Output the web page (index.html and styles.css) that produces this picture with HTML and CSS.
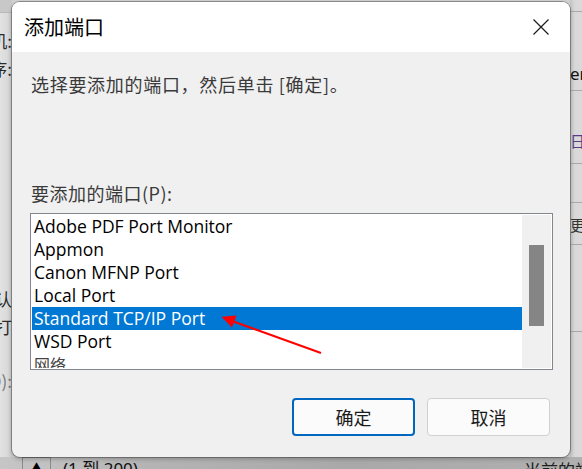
FILE: index.html
```html
<!DOCTYPE html>
<html lang="zh-CN">
<head>
<meta charset="utf-8">
<title>添加端口</title>
<link rel="stylesheet" href="styles.css">
</head>
<body>
<div class="backdrop">
  <div class="bg-left">
    <div class="frag f1">打印机:</div>
    <div class="frag f2">程序:</div>
    <div class="frag f3">默认</div>
    <div class="frag f4">打</div>
    <div class="frag f5">(D):</div>
  </div>
  <div class="bg-mid"></div>
  <div class="bg-right">
    <div class="rline r1"></div>
    <div class="rtext rt1">er</div>
    <div class="rline r2"></div>
    <div class="rtext rt2">日志</div>
    <div class="rline r3"></div>
    <div class="rline r4"></div>
    <div class="rtext rt3">更改</div>
    <div class="rline r5"></div>
    <div class="rline r6"></div>
  </div>
  <div class="bg-bottom">
    <span class="mini-btn">▲</span>
    <span class="btm-text">(1 到 200)</span>
    <span class="btm-right">当前的端口</span>
  </div>
</div>

<div class="dialog">
  <div class="titlebar">
    <span class="title">添加端口</span>
    <svg class="close" width="16" height="16" viewBox="0 0 16 16"><path d="M0.5 0.5 L15.5 15.5 M15.5 0.5 L0.5 15.5" stroke="#1a1a1a" stroke-width="1.2" fill="none"/></svg>
  </div>
  <div class="content">
    <div class="instr">选择要添加的端口，然后单击 [确定]。</div>
    <div class="label">要添加的端口(P):</div>
    <div class="listbox">
      <div class="items">
        <div class="item">Adobe PDF Port Monitor</div>
        <div class="item">Appmon</div>
        <div class="item">Canon MFNP Port</div>
        <div class="item">Local Port</div>
        <div class="item selected">Standard TCP/IP Port</div>
        <div class="item">WSD Port</div>
        <div class="item cjk">网络</div>
      </div>
      <div class="scrollbar"><div class="thumb"></div></div>
    </div>
    <div class="buttons">
      <div class="btn primary">确定</div>
      <div class="btn">取消</div>
    </div>
  </div>
</div>

<svg class="arrow" width="582" height="469" viewBox="0 0 582 469">
  <line x1="321" y1="353" x2="232" y2="321" stroke="#ff0000" stroke-width="2"/>
  <polygon points="221.5,316.8 236.5,315.6 232.0,327.4" fill="#ff0000"/>
</svg>
</body>
</html>
```

FILE: styles.css
```css
html, body {
  margin: 0;
  padding: 0;
}
body {
  width: 582px;
  height: 469px;
  overflow: hidden;
  position: relative;
  background: #c8c8c8;
  font-family: "Noto Sans CJK SC", "Noto Sans", sans-serif;
}

/* ---------- dimmed window behind ---------- */
.backdrop {
  display: grid;
  grid-template-columns: 12px 1fr 12px;
  grid-template-rows: 457px 12px;
  width: 582px;
  height: 469px;
}
.bg-left {
  background: linear-gradient(to right, #e2e2e2 0%, #dadada 60%, #c9c9c9 100%);
  display: flex;
  flex-direction: column;
  overflow: hidden;
  border-top: 1px solid #b8b8b8;
  margin-top: 12px;
}
.frag {
  display: flex;
  justify-content: flex-end;
  white-space: nowrap;
  font-size: 17px;
  line-height: 20px;
  height: 20px;
  color: #2a2a2a;
}
.f1 { margin-top: 18px; }
.f2 { margin-top: 8px; }
.f3 { margin-top: 210px; }
.f4 { margin-top: 8px; }
.f5 { margin-top: 34px; color: #777; }

.bg-mid { background: #d0d0d0; }

.bg-right {
  background: linear-gradient(to right, #c4c4c4 0%, #d8d8d8 40%, #dadada 100%);
  display: flex;
  flex-direction: column;
  overflow: hidden;
}
.rline { height: 1px; background: #a9a9a9; flex: none; }
.r1 { margin-top: 11px; }
.rtext {
  display: flex;
  justify-content: flex-start;
  white-space: nowrap;
  font-family: "Noto Sans", sans-serif;
  font-size: 17px;
  line-height: 20px;
  height: 20px;
  color: #111;
}
.rt1 { margin-top: 52px; }
.r2 { margin-top: 6px; }
.rt2 { margin-top: 40px; font-family: "Noto Sans CJK SC", sans-serif; font-size: 15px; color: #5a3a8a; }
.r3 { margin-top: 12px; }
.r4 { margin-top: 38px; }
.rt3 { margin-top: 12px; font-family: "Noto Sans CJK SC", sans-serif; font-size: 15px; color: #333; }
.r5 { margin-top: 9px; }
.r6 { margin-top: 86px; }

.bg-bottom {
  grid-column: 1 / 4;
  background: linear-gradient(to right, #c6c6c6 0%, #b4b4b4 25%, #a9a9a9 60%, #b0b0b0 100%);
  display: flex;
  align-items: flex-start;
  overflow: hidden;
  position: relative;
}
.mini-btn {
  margin-left: 22px;
  width: 27px;
  height: 14px;
  border: 1px solid #8a8a8a;
  border-bottom: none;
  background: #c2c2c2;
  font-size: 12px;
  line-height: 20px;
  text-align: center;
  color: #000;
}
.btm-text {
  margin-left: 12px;
  margin-top: 2px;
  font-family: "Noto Sans", "Noto Sans CJK SC", sans-serif;
  font-size: 17px;
  line-height: 20px;
  color: #111;
}
.btm-right {
  margin-left: auto;
  margin-right: 0;
  margin-top: 3px;
  width: 58px;
  white-space: nowrap;
  overflow: hidden;
  font-size: 17px;
  line-height: 20px;
  color: #222;
}

/* ---------- dialog ---------- */
.dialog {
  position: absolute;
  left: 12px;
  top: 2px;
  width: 558px;
  height: 455px;
  border-radius: 8px;
  background: #f0f0f0;
  box-shadow: 0 0 0 1px rgba(60, 60, 60, 0.45), 0 2px 4px rgba(0, 0, 0, 0.25);
  overflow: hidden;
  display: flex;
  flex-direction: column;
}
.titlebar {
  height: 50px;
  background: #ffffff;
  display: flex;
  align-items: center;
  justify-content: space-between;
  padding: 0 21px 0 12px;
  flex: none;
}
.title {
  font-size: 20px;
  color: #000;
  line-height: 24px;
}
.close {
  display: block;
  margin-top: -1px;
}

.content {
  display: flex;
  flex-direction: column;
  padding: 20px 17px 0 18px;
}
.instr {
  font-size: 18px;
  line-height: 24px;
  height: 24px;
  color: #3a3a3a;
  padding-left: 1px;
  letter-spacing: 0.7px;
}
.label {
  margin-top: 85px;
  font-size: 18px;
  line-height: 24px;
  height: 24px;
  color: #3a3a3a;
  padding-left: 1px;
  letter-spacing: 0.5px;
}
.listbox {
  margin-top: 8px;
  height: 157px;
  box-sizing: border-box;
  border: 1px solid #82868e;
  background: #ffffff;
  padding: 1px;
  display: grid;
  grid-template-columns: 1fr 29px;
  overflow: hidden;
}
.items {
  display: flex;
  flex-direction: column;
  overflow: hidden;
}
.item {
  flex: none;
  height: 23px;
  line-height: 23px;
  padding-left: 2px;
  font-family: "Open Sans", "Noto Sans", sans-serif;
  font-size: 17.5px;
  color: #000;
  white-space: nowrap;
}
.item.selected {
  background: #0078d4;
  color: #ffffff;
}
.item.cjk {
  font-family: "Noto Sans CJK SC", sans-serif;
  font-size: 16px;
  color: #444;
}
.scrollbar {
  background: #f0f0f0;
  padding: 30px 7px 0 7px;
}
.thumb {
  height: 81px;
  background: #858585;
}

.buttons {
  margin-top: 28px;
  margin-right: 3px;
  display: flex;
  justify-content: flex-end;
  gap: 12px;
}
.btn {
  width: 123px;
  height: 38px;
  box-sizing: border-box;
  border: 1px solid #d0d0d0;
  border-radius: 4px;
  background: #fbfbfb;
  display: flex;
  align-items: center;
  justify-content: center;
  font-size: 18px;
  color: #1a1a1a;
}
.btn.primary {
  border: 2px solid #0067c0;
}

.arrow {
  position: absolute;
  left: 0;
  top: 0;
  pointer-events: none;
}
```
